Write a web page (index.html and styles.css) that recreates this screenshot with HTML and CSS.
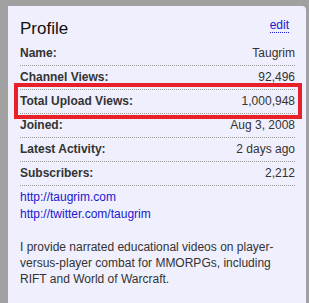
FILE: index.html
```html
<!DOCTYPE html>
<html lang="en">
<head>
    <meta charset="UTF-8">
    <meta name="viewport" content="width=device-width, initial-scale=1.0">
    <title>Profile</title>
    <link rel="stylesheet" href="styles.css">
</head>
<body>
    <div class="panel">
        <div class="panel-head">
            <h2 class="title">Profile</h2>
            <a class="edit" href="#">edit</a>
        </div>
        <div class="info">
            <div class="row">
                <span class="label">Name:</span>
                <span class="value">Taugrim</span>
            </div>
            <div class="row">
                <span class="label">Channel Views:</span>
                <span class="value">92,496</span>
            </div>
            <div class="row marked">
                <span class="label">Total Upload Views:</span>
                <span class="value">1,000,948</span>
            </div>
            <div class="row">
                <span class="label">Joined:</span>
                <span class="value">Aug 3, 2008</span>
            </div>
            <div class="row">
                <span class="label">Latest Activity:</span>
                <span class="value">2 days ago</span>
            </div>
            <div class="row">
                <span class="label">Subscribers:</span>
                <span class="value">2,212</span>
            </div>
        </div>
        <div class="links">
            <a href="#">http://taugrim.com</a>
            <a href="#">http://twitter.com/taugrim</a>
        </div>
        <p class="about">I provide narrated educational videos on player-versus-player combat for MMORPGs, including RIFT and World of Warcraft.</p>
    </div>
</body>
</html>
```

FILE: styles.css
```css
html, body {
    margin: 0;
    height: 100%;
}
body {
    background-color: #a0a0a0;
    padding: 6px 3px 0 8px;
    box-sizing: border-box;
    overflow: hidden;
    font-family: "Liberation Sans", Arial, sans-serif;
    font-size: 12px;
    color: #333;
}
.panel {
    background-color: #efeffd;
    border-top-right-radius: 4px;
    height: 100%;
    padding: 13px 11px 0 12px;
    box-sizing: border-box;
}
.panel-head {
    display: flex;
    justify-content: space-between;
    align-items: flex-start;
}
.title {
    margin: 0;
    font-size: 17px;
    font-weight: normal;
    line-height: 20px;
    color: #111;
}
.edit {
    color: #1a1ad0;
    text-decoration: none;
    border-bottom: 1px dotted #1a1ad0;
    line-height: 13px;
    margin: 0 6px 0 0;
}
.info {
    margin-top: 3px;
}
.row {
    display: flex;
    justify-content: space-between;
    padding: 4px 0;
    line-height: 15px;
    border-bottom: 1px dotted #999;
    position: relative;
}
.label {
    font-weight: bold;
}
.marked::after {
    content: '';
    position: absolute;
    top: -7px;
    bottom: -6px;
    left: -6px;
    right: -7px;
    border: 4px solid #e8202a;
}
.links {
    display: flex;
    flex-direction: column;
    margin-top: 3px;
    line-height: 17px;
}
.links a {
    color: #1a1ad0;
    text-decoration: none;
}
.about {
    margin: 16px 0 0;
    line-height: 16px;
}
```
